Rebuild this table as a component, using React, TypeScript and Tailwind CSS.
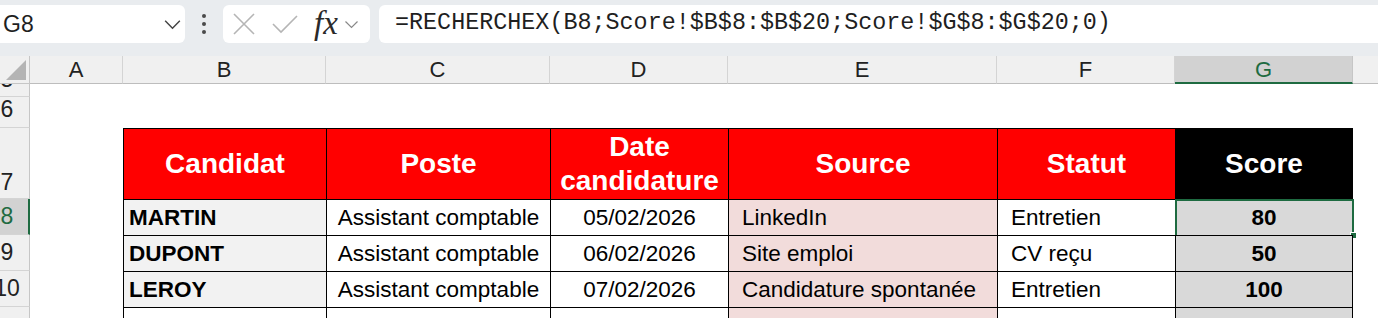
import React from "react";

const columns = [
  { letter: "A", width: "w-[93px]" },
  { letter: "B", width: "w-[203px]" },
  { letter: "C", width: "w-[224px]" },
  { letter: "D", width: "w-[178px]" },
  { letter: "E", width: "w-[269px]" },
  { letter: "F", width: "w-[178px]" },
  { letter: "G", width: "w-[178px]" },
];

const candidates = [
  { nom: "MARTIN", poste: "Assistant comptable", date: "05/02/2026", source: "LinkedIn", statut: "Entretien", score: 80 },
  { nom: "DUPONT", poste: "Assistant comptable", date: "06/02/2026", source: "Site emploi", statut: "CV reçu", score: 50 },
  { nom: "LEROY", poste: "Assistant comptable", date: "07/02/2026", source: "Candidature spontanée", statut: "Entretien", score: 100 },
];

const sheetFont = { fontFamily: '"Liberation Sans", Arial, sans-serif' };

const Chevron = ({ className = "" }: { className?: string }) => (
  <svg viewBox="0 0 20 12" className={className} fill="none" stroke="currentColor" strokeWidth="1.6">
    <path d="M2 2 L10 10 L18 2" />
  </svg>
);

interface RowHeaderProps {
  n?: number;
  height: string;
  selected?: boolean;
  pad?: string;
}

const RowHeader = ({ n, height, selected = false, pad = "pb-[6px]" }: RowHeaderProps) => (
  <div
    className={`flex w-[30px] shrink-0 items-end overflow-hidden border-b border-b-[#d4d4d4] ${height} ${
      selected
        ? "border-r-2 border-r-[#1e6b41] bg-[#d2d2d2] text-[#1e6b41]"
        : "border-r border-r-[#c6c6c6] bg-[#f0f0f0] text-[#222]"
    }`}
  >
    {n !== undefined && (
      <div className={`-ml-[16px] w-[46px] shrink-0 text-center text-[23px] leading-none ${pad}`}>{n}</div>
    )}
  </div>
);

const Toolbar = () => (
  <div className="flex h-[56px] shrink-0 items-start overflow-hidden bg-[#e9ecef] pt-[5px]">
    {/* name box */}
    <div className="-ml-[8px] flex h-[38px] w-[193px] shrink-0 items-center justify-between rounded-md bg-white pl-[11px] pr-[3px]">
      <span className="text-[23px] text-[#1f1f1f]" style={{ fontFamily: '"Liberation Sans", Arial, sans-serif' }}>
        G8
      </span>
      <Chevron className="h-[11px] w-[19px] text-[#444]" />
    </div>

    {/* kebab */}
    <div className="flex h-[38px] w-[38px] shrink-0 flex-col items-center justify-center gap-[4px]">
      <span className="h-[4px] w-[4px] rounded-full bg-[#4a4a4a]" />
      <span className="h-[4px] w-[4px] rounded-full bg-[#4a4a4a]" />
      <span className="h-[4px] w-[4px] rounded-full bg-[#4a4a4a]" />
    </div>

    {/* cancel / enter / fx */}
    <div className="flex h-[38px] w-[147px] shrink-0 items-center rounded-md bg-white pl-[10px]">
      <svg viewBox="0 0 22 22" className="h-[22px] w-[22px] text-[#b5b5b5]" fill="none" stroke="currentColor" strokeWidth="1.6">
        <path d="M1 1 L21 21 M21 1 L1 21" />
      </svg>
      <svg viewBox="0 0 26 20" className="ml-[17px] h-[20px] w-[26px] text-[#b5b5b5]" fill="none" stroke="currentColor" strokeWidth="1.6">
        <path d="M1 10 L9 18 L25 2" />
      </svg>
      <span
        className="ml-[16px] -mt-[2px] text-[33px] leading-none text-[#2a2a2a] italic"
        style={{ fontFamily: '"Liberation Serif", "Times New Roman", serif' }}
      >
        fx
      </span>
      <Chevron className="ml-[6px] h-[9px] w-[15px] text-[#888]" />
    </div>

    {/* formula */}
    <div className="ml-[9px] flex h-[38px] flex-1 items-center rounded-l-md bg-white pl-[16px]">
      <span
        className="whitespace-nowrap text-[23.4px] text-[#1f1f1f]"
        style={{ fontFamily: '"Liberation Mono", "DejaVu Sans Mono", monospace' }}
      >
        =RECHERCHEX(B8;Score!$B$8:$B$20;Score!$G$8:$G$20;0)
      </span>
    </div>
  </div>
);

const ColumnHeaders = () => (
  <div className="flex h-[28px] shrink-0">
    <div className="flex w-[30px] shrink-0 items-end justify-end border-b border-r border-[#c6c6c6] bg-[#f0f0f0] pb-[3px] pr-[3px]">
      <svg viewBox="0 0 20 20" className="h-[20px] w-[20px]">
        <path d="M20 0 L20 20 L0 20 Z" fill="#b4b4b4" />
      </svg>
    </div>
    {columns.map((c) => {
      const sel = c.letter === "G";
      return (
        <div
          key={c.letter}
          className={`flex shrink-0 items-center justify-center text-[22px] ${c.width} ${
            sel
              ? "border-b-2 border-r border-b-[#1e6b41] border-r-[#c6c6c6] bg-[#d2d2d2] text-[#1e6b41]"
              : "border-b border-r border-b-[#bdbdbd] border-r-[#d4d4d4] bg-[#f0f0f0] text-[#222]"
          }`}
        >
          {c.letter}
        </div>
      );
    })}
    <div className="flex-1 border-b border-b-[#bdbdbd] bg-[#f0f0f0]" />
  </div>
);

const headerCell = "flex shrink-0 items-center justify-center border-l border-t border-black text-center text-[28px] font-bold leading-[1.2] text-white";
const dataCell = "flex shrink-0 items-center border-l border-t border-black text-[22.5px] text-black whitespace-nowrap overflow-hidden";

export default function App() {
  return (
    <div className="flex h-[318px] w-full flex-col overflow-hidden bg-white" style={sheetFont}>
      <Toolbar />
      <ColumnHeaders />

      {/* row 5 (scrolled, partly hidden) */}
      <div className="flex">
        <RowHeader n={5} height="h-[13px]" pad="pb-[5px]" />
      </div>

      {/* row 6 */}
      <div className="flex">
        <RowHeader n={6} height="h-[31px]" />
      </div>

      {/* row 7 : table header */}
      <div className="flex">
        <RowHeader n={7} height="h-[71px]" pad="pb-[4px]" />
        <div className="w-[93px] shrink-0" />
        <div className={`${headerCell} w-[203px] bg-[#ff0000]`}>Candidat</div>
        <div className={`${headerCell} w-[224px] bg-[#ff0000]`}>Poste</div>
        <div className={`${headerCell} w-[178px] bg-[#ff0000]`}>
          Date
          <br />
          candidature
        </div>
        <div className={`${headerCell} w-[269px] bg-[#ff0000]`}>Source</div>
        <div className={`${headerCell} w-[178px] bg-[#ff0000]`}>Statut</div>
        <div className={`${headerCell} w-[178px] border-r bg-black`}>Score</div>
      </div>

      {candidates.map((c, i) => {
        const selected = i === 0;
        return (
          <div key={c.nom} className="flex">
            <RowHeader n={8 + i} height="h-[36px]" selected={selected} />
            <div className="w-[93px] shrink-0" />
            <div className={`${dataCell} w-[203px] bg-[#f2f2f2] pl-[5px] font-bold`}>{c.nom}</div>
            <div className={`${dataCell} w-[224px] justify-center`}>{c.poste}</div>
            <div className={`${dataCell} w-[178px] justify-center`}>{c.date}</div>
            <div className={`${dataCell} w-[269px] bg-[#f2dcdb] pl-[13px]`}>{c.source}</div>
            <div className={`${dataCell} w-[178px] pl-[13px]`}>{c.statut}</div>
            <div className={`${dataCell} relative w-[178px] justify-center overflow-visible border-r bg-[#d9d9d9] font-bold`}>
              {c.score}
              {selected && (
                <>
                  <span className="pointer-events-none absolute -left-px -top-px h-[38px] w-[179px] border-2 border-[#1e6b41]" />
                  <span className="absolute -bottom-[4px] -right-[5px] h-[7px] w-[7px] border border-white bg-[#1e6b41]" />
                </>
              )}
            </div>
          </div>
        );
      })}

      {/* row 11 (cut off at the window edge) */}
      <div className="flex">
        <RowHeader height="h-[24px]" />
        <div className="w-[93px] shrink-0" />
        <div className={`${dataCell} h-[24px] w-[203px]`} />
        <div className={`${dataCell} h-[24px] w-[224px]`} />
        <div className={`${dataCell} h-[24px] w-[178px]`} />
        <div className={`${dataCell} h-[24px] w-[269px] bg-[#f2dcdb]`} />
        <div className={`${dataCell} h-[24px] w-[178px]`} />
        <div className={`${dataCell} h-[24px] w-[178px] border-r bg-[#d9d9d9]`} />
      </div>
    </div>
  );
}
